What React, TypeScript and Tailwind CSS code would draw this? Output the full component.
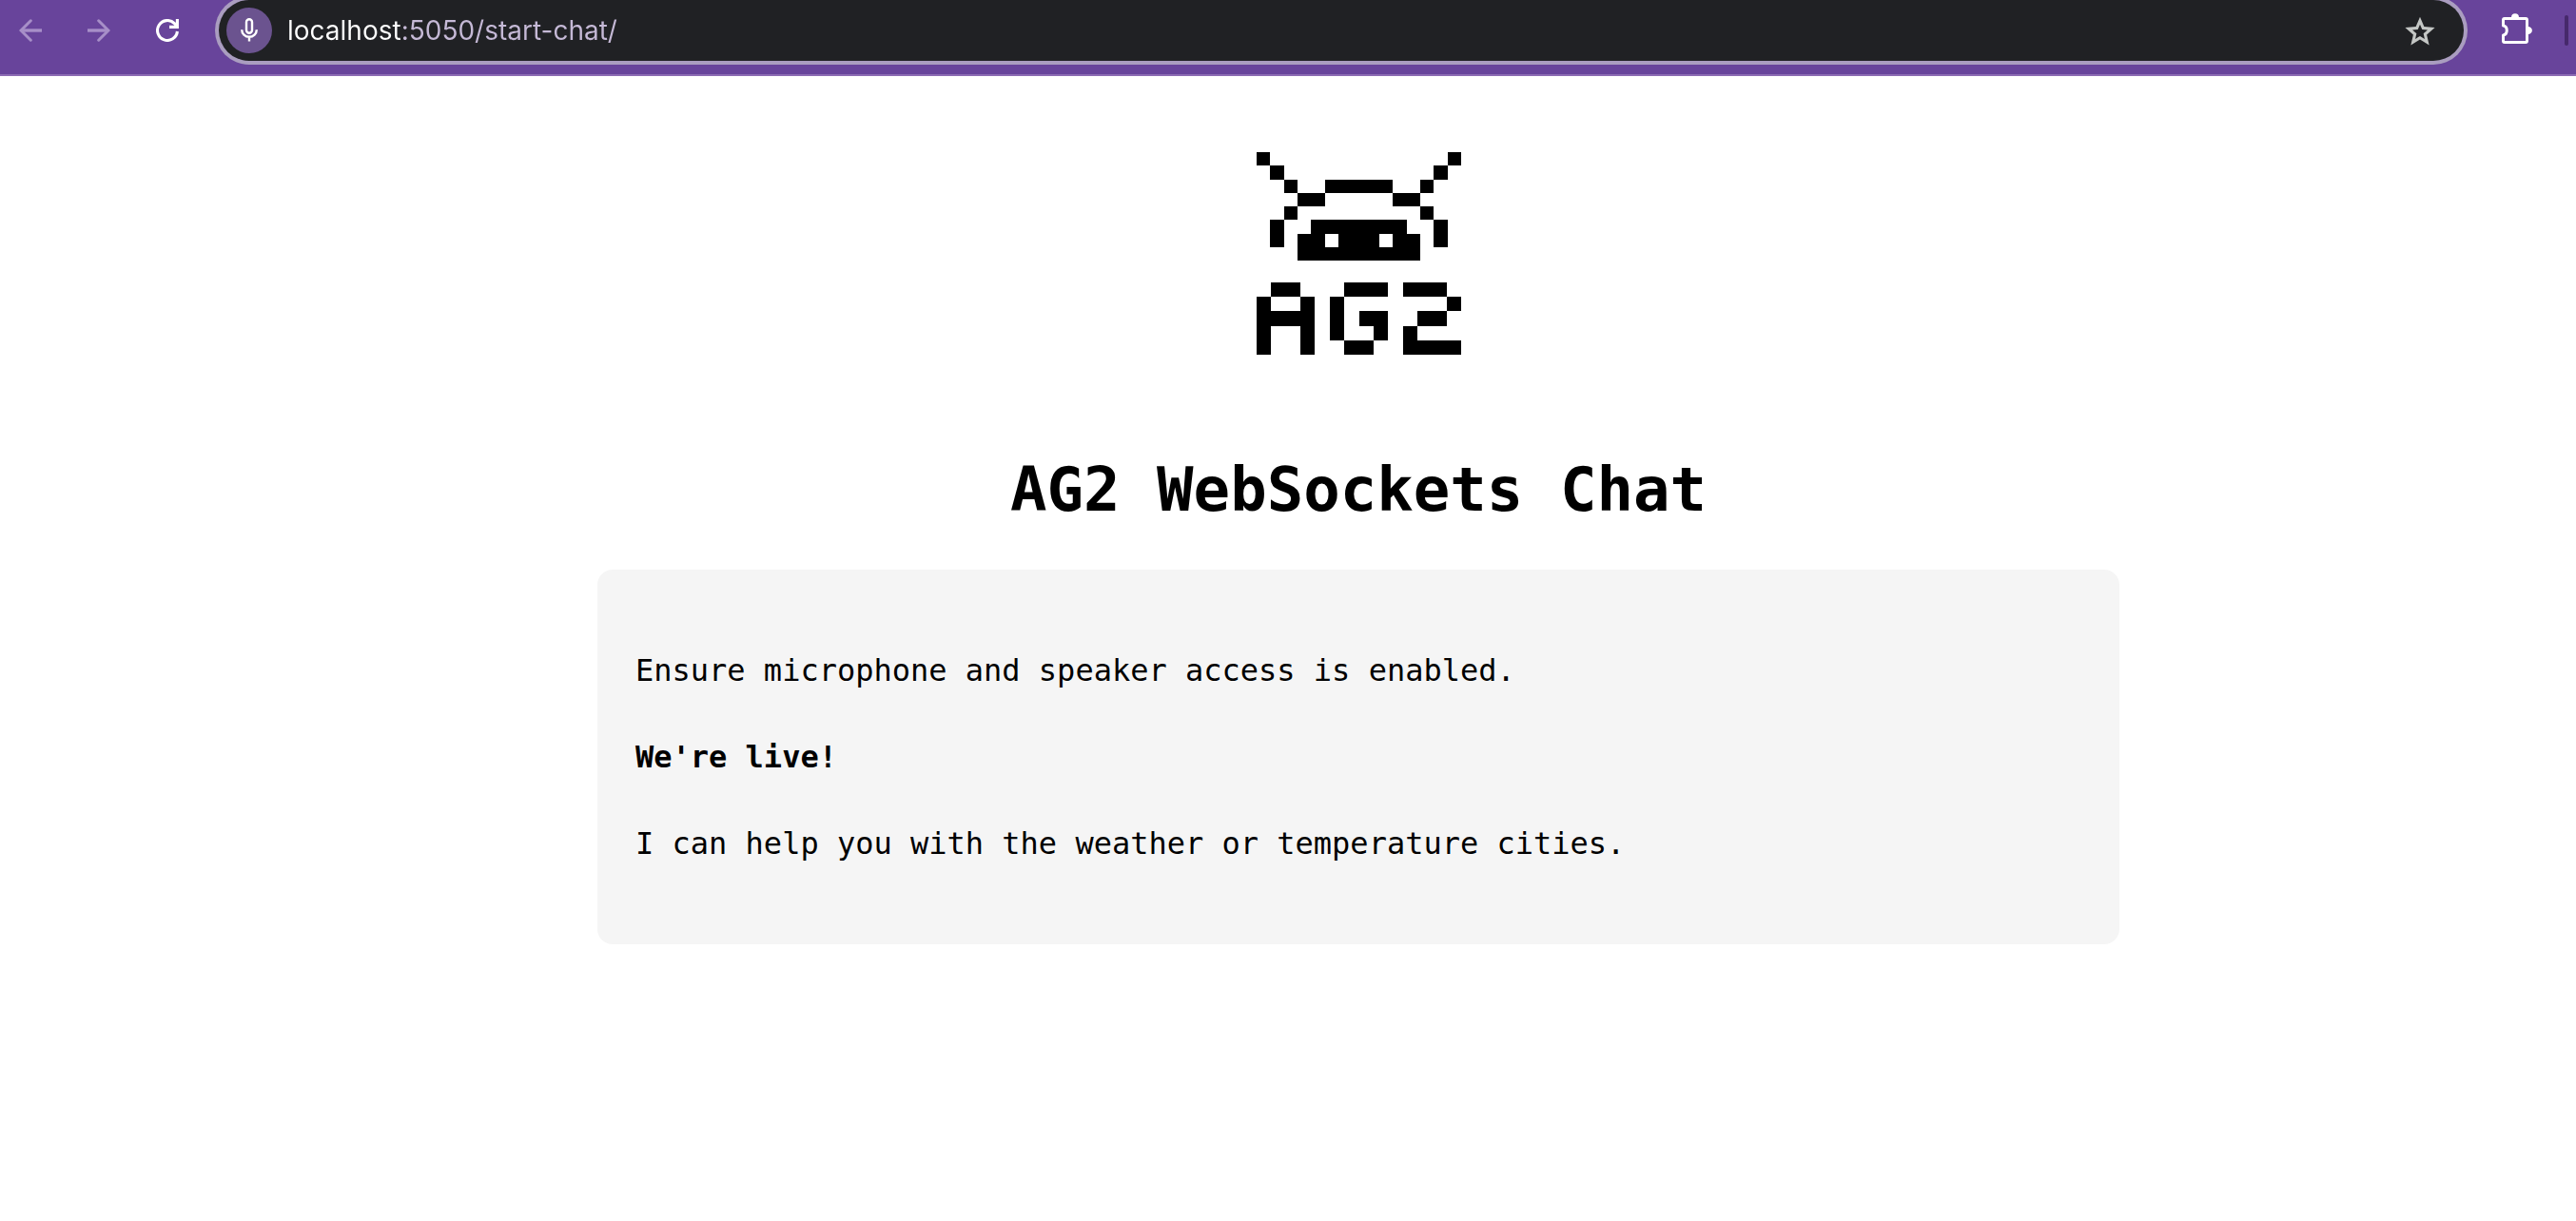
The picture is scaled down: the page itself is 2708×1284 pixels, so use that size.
import React from "react";

const ROBOT = [
  "#.............#",
  ".#...........#.",
  "..#..#####..#..",
  "...##.....##...",
  "..#.........#..",
  ".#..#######..#.",
  ".#.##.###.##.#.",
  "...#########...",
];

const WORDMARK = [
  ".##...###.###.",
  "#..#.#.......#",
  "####.#.##..##.",
  "#..#.#..#.#...",
  "#..#..##..####",
];

function Pixels({ rows, top, width, height }: { rows: string[]; top: number; width: number; height: number }) {
  const cellW = width / rows[0].length;
  const cellH = height / rows.length;
  return (
    <g>
      {rows.flatMap((row, y) =>
        Array.from(row.matchAll(/#+/g)).map((run) => (
          <rect
            key={`${y}-${run.index}`}
            x={run.index! * cellW}
            y={top + y * cellH}
            width={run[0].length * cellW}
            height={cellH}
          />
        )),
      )}
    </g>
  );
}

function Logo() {
  return (
    <svg viewBox="0 0 215 213" className="w-[215px]" shapeRendering="crispEdges" role="img" aria-label="AG2">
      <Pixels rows={ROBOT} top={0} width={215} height={114} />
      <Pixels rows={WORDMARK} top={137} width={215} height={76} />
    </svg>
  );
}

function BackIcon() {
  return (
    <svg viewBox="0 0 24 24" className="size-6" fill="none" stroke="currentColor" strokeWidth="3">
      <path d="M24 12H3" strokeWidth="3.4" />
      <path d="M12.3 1.8 2.1 12l10.2 10.2" strokeLinecap="round" />
    </svg>
  );
}

function ForwardIcon() {
  return (
    <svg viewBox="0 0 24 24" className="size-6" fill="none" stroke="currentColor" strokeWidth="3">
      <path d="M0 12h21" strokeWidth="3.4" />
      <path d="M11.7 1.8 21.9 12 11.7 22.2" strokeLinecap="round" />
    </svg>
  );
}

function ReloadIcon() {
  return (
    <svg viewBox="0 0 24 24" className="size-6" fill="none" stroke="currentColor" strokeWidth="3.1">
      <path d="M22.4 13A10.45 10.45 0 1 1 19.4 4.6L21.8 7.6" />
      <path d="M22.4 0v8.4H14" />
    </svg>
  );
}

function MicIcon() {
  return (
    <svg viewBox="0 0 24 24" className="size-6 overflow-visible" fill="none" stroke="currentColor" strokeWidth="2.4">
      <rect x="9" y="0.3" width="6" height="14.4" rx="3" />
      <path d="M4.2 11.2a7.8 7.6 0 0 0 15.6 0M12 18.8V23.4" />
    </svg>
  );
}

function StarIcon() {
  return (
    <svg viewBox="70 -885 820 820" className="size-8" fill="currentColor">
      <path d="m354-247 126-76 126 77-33-144 111-96-146-13-58-136-58 135-146 13 111 97-33 143ZM233-80l65-281L80-550l288-25 112-265 112 265 288 25-218 189 65 281-247-149L233-80Z" />
    </svg>
  );
}

function ExtensionsIcon() {
  return (
    <svg viewBox="0 2 32 32" className="size-8 overflow-visible" fill="none">
      <path
        d="M3 5.5H25.1a1.4 1.4 0 0 1 1.4 1.4v22.2a1.4 1.4 0 0 1-1.4 1.4H2.9a1.4 1.4 0 0 1-1.4-1.4V22.9A4.4 4.95 0 0 0 1.5 13.1V6.9a1.4 1.4 0 0 1 1.4-1.4Z"
        stroke="currentColor"
        strokeWidth="3"
        strokeLinejoin="round"
      />
      <path d="M10 4.4a4 4.2 0 0 1 8 0ZM27.6 14a4.3 4 0 0 1 0 8Z" fill="currentColor" />
    </svg>
  );
}

function Toolbar() {
  return (
    <header className="flex items-center border-b-2 border-[#8c6bb3] bg-[#68449b] pr-2 pb-3.5 pl-5 text-white">
      <nav className="flex gap-12 pr-[42px]" aria-label="History">
        <button type="button" aria-label="Back" disabled className="text-[#a78fc8]">
          <BackIcon />
        </button>
        <button type="button" aria-label="Forward" disabled className="text-[#a78fc8]">
          <ForwardIcon />
        </button>
        <button type="button" aria-label="Reload">
          <ReloadIcon />
        </button>
      </nav>
      <div className="flex h-16 flex-1 items-center rounded-full bg-[#202124] pr-[30px] pl-2 ring-4 ring-[#aa9dc0]">
        <button
          type="button"
          aria-label="Microphone in use"
          className="flex size-12 items-center justify-center rounded-full bg-[#6b538f]"
        >
          <MicIcon />
        </button>
        <input
          type="text"
          aria-label="Address"
          defaultValue="localhost:5050/start-chat/"
          spellCheck={false}
          className="ml-4 min-w-0 flex-1 bg-[linear-gradient(to_right,#ffffff_120px,#c5b9d6_120px)] bg-clip-text font-['Inter',sans-serif] text-[28px] leading-9 text-transparent caret-white outline-none"
        />
        <button type="button" aria-label="Bookmark this page" className="text-[#c4c7c5]">
          <StarIcon />
        </button>
      </div>
      <button type="button" aria-label="Extensions" className="ml-10">
        <ExtensionsIcon />
      </button>
      <div className="ml-[34px] h-8 w-1 rounded-full bg-[#46296b]" />
    </header>
  );
}

export default function App() {
  return (
    <div className="min-h-screen bg-white text-black">
      <Toolbar />
      <main className="flex flex-col items-center pt-20 pl-[148px] font-['DejaVu_Sans_Mono',monospace]">
        <Logo />
        <h1 className="mt-[100px] text-[64px] leading-[84px] font-bold">AG2 WebSockets Chat</h1>
        <section className="mt-[42px] flex w-full max-w-[1600px] flex-col gap-[49px] rounded-2xl bg-[#f5f5f5] px-10 py-[85px] text-[32px] leading-[42px]">
          <p>Ensure microphone and speaker access is enabled.</p>
          <p className="font-bold">We're live!</p>
          <p>I can help you with the weather or temperature cities.</p>
        </section>
      </main>
    </div>
  );
}
